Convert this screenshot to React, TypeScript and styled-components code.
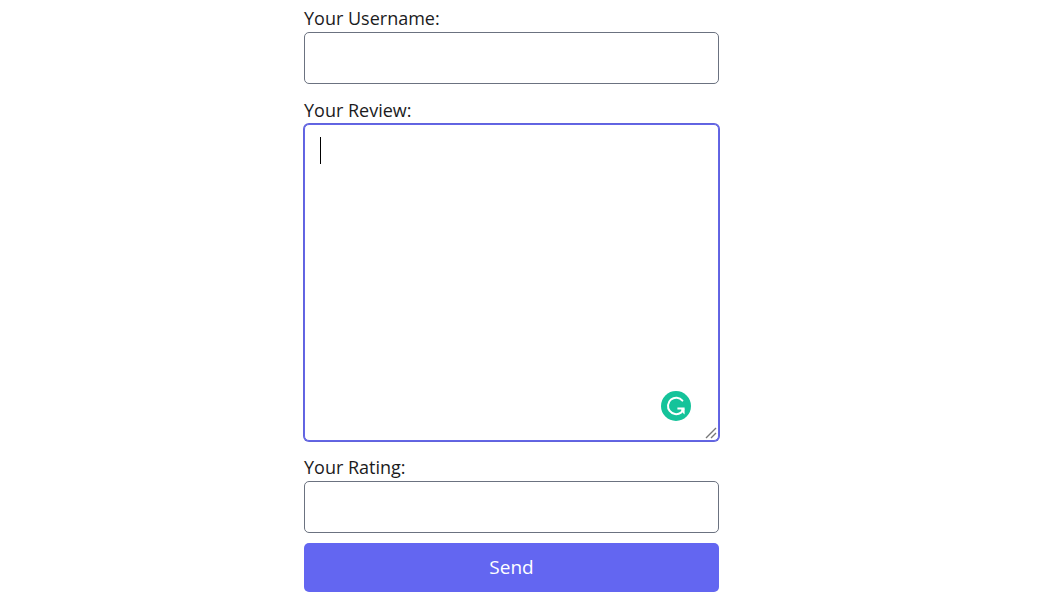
import React from "react";
import styled, { createGlobalStyle } from "styled-components";

const GlobalStyle = createGlobalStyle`
  *, *::before, *::after { box-sizing: border-box; }
  body {
    margin: 0;
    background: #fff;
    color: #1b1b1d;
    font: 18px/27px "Open Sans", "Noto Sans", sans-serif;
  }
`;

const Page = styled.main`
  display: flex;
  justify-content: center;
  padding: 5px 14px 18px 0;
`;

const ReviewForm = styled.form`
  display: flex;
  flex-direction: column;
  gap: 13px;
  width: 415px;
  max-width: 100%;
`;

const Field = styled.div`
  display: flex;
  flex-direction: column;
`;

const Actions = styled.div`
  display: flex;
  flex-direction: column;
  gap: 10px;
`;

const Label = styled.label`
  display: block;
`;

const TextInput = styled.input`
  width: 100%;
  height: 52px;
  padding: 12px 16px;
  border: 1px solid #6b7280;
  border-radius: 5px;
  background: #fff;
  color: inherit;
  font: inherit;
  outline: none;
`;

const EditorFrame = styled.div`
  position: relative;
  display: flex;
`;

const TextArea = styled.textarea`
  width: 100%;
  height: 317px;
  padding: 12px 16px;
  border: 1px solid #6366e8;
  border-radius: 5px;
  box-shadow: 0 0 0 1px #6163dc;
  background: #fff;
  color: inherit;
  caret-color: transparent;
  font: inherit;
  outline: none;
  resize: none;
`;

const Caret = styled.span`
  position: absolute;
  top: 13px;
  left: 16px;
  width: 1px;
  height: 27px;
  background: #000;
`;

const Assistant = styled.svg`
  position: absolute;
  right: 28px;
  bottom: 20px;
  width: 30px;
  height: 30px;
`;

const Grip = styled.svg`
  position: absolute;
  right: 2px;
  bottom: 2px;
  width: 12px;
  height: 12px;
`;

const SendButton = styled.button`
  width: 100%;
  padding: 11px 16px;
  border: 0;
  border-radius: 5px;
  background: #6366f1;
  color: #fff;
  font: inherit;
  font-size: 19px;
  font-weight: 500;
  cursor: pointer;
`;

export default function App() {
  return (
    <>
      <GlobalStyle />
      <Page>
        <ReviewForm onSubmit={(event) => event.preventDefault()}>
          <Field>
            <Label htmlFor="username">Your Username:</Label>
            <TextInput id="username" type="text" />
          </Field>
          <Field>
            <Label htmlFor="review">Your Review:</Label>
            <EditorFrame>
              <TextArea id="review" />
              <Caret />
              <Assistant viewBox="0 0 30 30" aria-hidden="true">
                <circle cx="15" cy="15" r="15" fill="#15c39a" />
                <path
                  d="M21.4 9.6 A8.2 8.2 0 1 0 20 21.6 L22.4 18.4"
                  fill="none"
                  stroke="#fff"
                  strokeWidth="2"
                  strokeLinecap="round"
                  strokeLinejoin="round"
                />
                <path d="M16.4 16.4 H23.6 V23.6 L21.4 21.6 L20.2 18.4 H16.4 Z" fill="#fff" />
              </Assistant>
              <Grip viewBox="0 0 12 12" aria-hidden="true">
                <path d="M1 11 L11 1 M6 11 L11 6" fill="none" stroke="#777" strokeWidth="1.4" />
              </Grip>
            </EditorFrame>
          </Field>
          <Actions>
            <Field>
              <Label htmlFor="rating">Your Rating:</Label>
              <TextInput id="rating" type="text" />
            </Field>
            <SendButton type="submit">Send</SendButton>
          </Actions>
        </ReviewForm>
      </Page>
    </>
  );
}
